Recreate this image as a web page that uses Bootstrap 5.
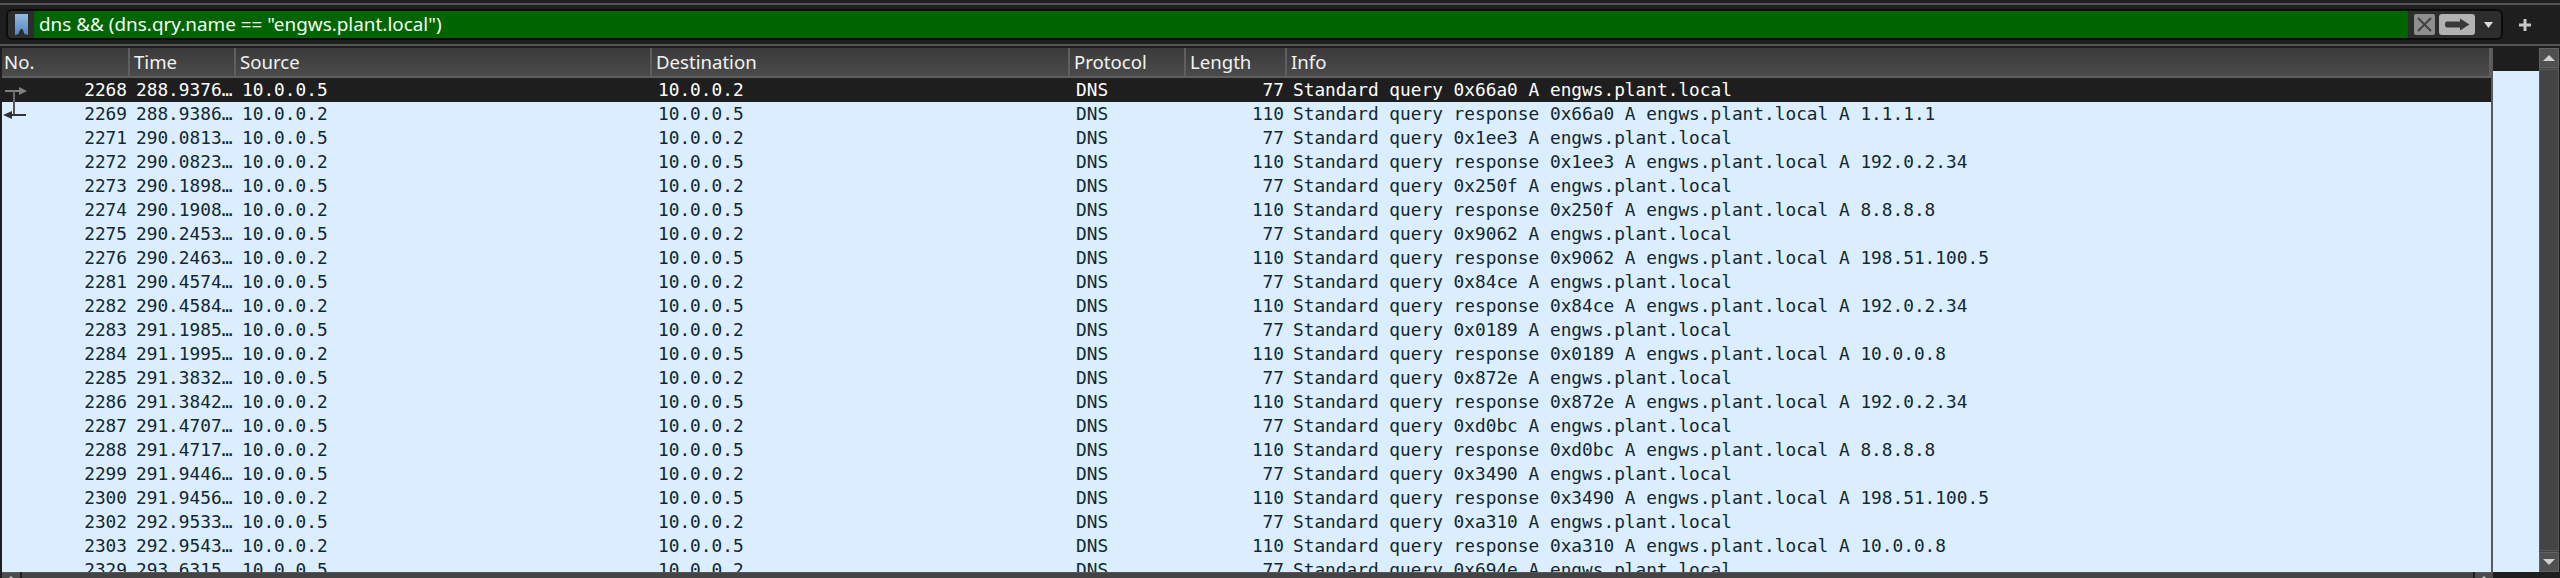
<!DOCTYPE html>
<html lang="en">
<head>
<meta charset="utf-8">
<title>Packet list</title>
<link href="https://cdn.jsdelivr.net/npm/bootstrap@5.3.0/dist/css/bootstrap.min.css" rel="stylesheet">
<style>
html,body{height:100%;background:#1e1e1e;overflow:hidden}
.ws-app{height:578px;background:#1e1e1e;overflow:hidden}
.ws-rule{height:2px;background:#555;margin-top:3px;flex:none}
.ws-filterrow{height:39px;padding:0 0 0 6px;flex:none}
.ws-filter{width:2497px;height:31px;background:#2d2d2d;border:2px solid #0c0c0c;border-radius:6px;overflow:hidden}
.ws-book{width:26px;flex:none}
.ws-input{flex:1;background:#006400;color:#f4fff4;font:18.9px/27px "Noto Sans",sans-serif;padding-left:5px;white-space:nowrap;height:27px}
.ws-x{width:21px;height:21px;background:#8e8e8e;border-radius:2px;margin-left:6px}
.ws-go{width:36px;height:21px;background:#b2b2b2;border-radius:3px;margin-left:4px}
.ws-drop{width:26px}
.ws-plus{flex:1;padding-right:13px}
.ws-rule2{height:2px;background:#555;flex:none}
.ws-main{height:526px;flex:none;padding-top:2px}
.ws-leftgap{width:2px;flex:none}
.ws-view{width:2537px;flex:none;background:#daeeff;position:relative;overflow:hidden}
.ws-corner{height:23px;background:#1e1e1e}
.ws-list{width:2491px;table-layout:fixed;margin:-23px 0 0;border-collapse:separate;border-spacing:0;border-right:2px solid #5a5a5a}
.ws-list th{height:30px;padding:0 0 0 4px;background:linear-gradient(#3a3a3a,#4b4b4b);color:#f2f2f2;font:400 18.6px/28px "Noto Sans",sans-serif;border-right:2px solid #5f5f5f;border-bottom:2px solid #5f5f5f;box-shadow:none;overflow:hidden}
.ws-list th:first-child{padding-left:2px}
.ws-list td{height:24px;padding:0 0 1px 6px;background:#daeeff;color:#12272e;font:17.8px/23px "DejaVu Sans Mono",monospace;white-space:nowrap;overflow:hidden;border:0;box-shadow:none}
.ws-list td.ws-num{text-align:right;padding:0 3px 1px 0}
.ws-list tr.ws-sel td{background:#1e1e1e;color:#fff}
.ws-marks{position:absolute;left:1px;top:39px}
.ws-vbar{width:20px;flex:none;background:#444}
.ws-vbtn{height:20px;flex:none;background:#505050;border:1px solid #626262}
.ws-track{flex:1;margin:1px 0;border:1px solid #585858;background:#444}
.ws-hbar{height:6px;flex:none}
.ws-hgap-l{width:2px}
.ws-hbtn{width:18px;background:#4c4c4c;border-top:1px solid #5a5a5a;overflow:hidden}
.ws-hsep{width:2px}
.ws-htrack{flex:1;background:#444;border-top:1px solid #555}
.ws-hgap-r{width:67px}
</style>
</head>
<body>
<div class="ws-app d-flex flex-column">
  <div class="ws-rule"></div>
  <div class="ws-filterrow d-flex align-items-center">
    <div class="ws-filter d-flex align-items-center">
      <div class="ws-book d-flex justify-content-center align-items-center">
        <svg width="13" height="21" viewBox="0 0 13 21"><defs><linearGradient id="bk" x1="0" y1="0" x2="0" y2="1"><stop offset="0" stop-color="#93b9e4"/><stop offset="1" stop-color="#5686c0"/></linearGradient></defs><path d="M0 0H13V21L9.500 20C8.500 17 8 15 6.500 15C5 15 4.500 17 3.500 20L0 21Z" fill="url(#bk)"/></svg>
      </div>
      <div class="ws-input">dns &amp;&amp; (dns.qry.name == "engws.plant.local")</div>
      <div class="ws-x d-flex justify-content-center align-items-center">
        <svg width="17" height="17" viewBox="0 0 17 17"><path d="M2 2L15 15M15 2L2 15" stroke="#404040" stroke-width="2"/></svg>
      </div>
      <div class="ws-go d-flex justify-content-center align-items-center">
        <svg width="25" height="13" viewBox="0 0 25 13"><path d="M2 3.500H15V0.500L24.500 6.500L15 12.500V9.500H2Q0 9.500 0 6.500Q0 3.500 2 3.500Z" fill="#383838"/></svg>
      </div>
      <div class="ws-drop d-flex justify-content-center align-items-center">
        <svg width="9" height="6" viewBox="0 0 9 6"><path d="M0 0H9L4.500 6Z" fill="#dcdcdc"/></svg>
      </div>
    </div>
    <div class="ws-plus d-flex justify-content-center align-items-center">
      <svg width="12" height="12" viewBox="0 0 12 12"><path d="M6 0V12M0 6H12" stroke="#c8c8c8" stroke-width="3"/></svg>
    </div>
  </div>
  <div class="ws-rule2"></div>
  <div class="ws-main d-flex">
    <div class="ws-leftgap"></div>
    <div class="ws-view">
      <div class="ws-corner"></div>
      <table class="ws-list" id="list">
        <colgroup><col style="width:128px"><col style="width:106px"><col style="width:416px"><col style="width:418px"><col style="width:116px"><col style="width:101px"><col></colgroup>
        <thead><tr><th>No.</th><th>Time</th><th>Source</th><th>Destination</th><th>Protocol</th><th>Length</th><th>Info</th></tr></thead>
        <tbody id="rows"></tbody>
      </table>
      <svg class="ws-marks" width="24" height="32" viewBox="0 0 24 32"><path d="M2 4H16" stroke="#808080" stroke-width="2"/><path d="M16 0L24 4L16 8Z" fill="#808080"/><path d="M11 4V15" stroke="#6a6a6a" stroke-width="2"/><path d="M11 15V28" stroke="#555" stroke-width="2"/><path d="M8 28H23" stroke="#333" stroke-width="2"/><path d="M0 28L9 24V32Z" fill="#333"/></svg>
    </div>
    <div class="ws-vbar d-flex flex-column">
      <div class="ws-vbtn d-flex justify-content-center align-items-center"><svg width="12" height="6" viewBox="0 0 12 6"><path d="M6 0L12 6H0Z" fill="#d0d0d0"/></svg></div>
      <div class="ws-track"></div>
      <div class="ws-vbtn d-flex justify-content-center align-items-center"><svg width="12" height="6" viewBox="0 0 12 6"><path d="M0 0H12L6 6Z" fill="#d0d0d0"/></svg></div>
    </div>
  </div>
  <div class="ws-hbar d-flex">
    <div class="ws-hgap-l"></div>
    <div class="ws-hbtn d-flex justify-content-center align-items-end"><svg width="4" height="2" viewBox="0 0 4 2"><path d="M2 0L4 2H0Z" fill="#c8c8c8"/></svg></div>
    <div class="ws-hsep"></div>
    <div class="ws-htrack"></div>
    <div class="ws-hsep"></div>
    <div class="ws-hbtn d-flex justify-content-center align-items-end"><svg width="4" height="2" viewBox="0 0 4 2"><path d="M2 0L4 2H0Z" fill="#c8c8c8"/></svg></div>
    <div class="ws-hgap-r"></div>
  </div>
</div>
<script>
var d=[["2268","288.9376…","10.0.0.5","10.0.0.2","77","Standard query 0x66a0 A engws.plant.local"],
["2269","288.9386…","10.0.0.2","10.0.0.5","110","Standard query response 0x66a0 A engws.plant.local A 1.1.1.1"],
["2271","290.0813…","10.0.0.5","10.0.0.2","77","Standard query 0x1ee3 A engws.plant.local"],
["2272","290.0823…","10.0.0.2","10.0.0.5","110","Standard query response 0x1ee3 A engws.plant.local A 192.0.2.34"],
["2273","290.1898…","10.0.0.5","10.0.0.2","77","Standard query 0x250f A engws.plant.local"],
["2274","290.1908…","10.0.0.2","10.0.0.5","110","Standard query response 0x250f A engws.plant.local A 8.8.8.8"],
["2275","290.2453…","10.0.0.5","10.0.0.2","77","Standard query 0x9062 A engws.plant.local"],
["2276","290.2463…","10.0.0.2","10.0.0.5","110","Standard query response 0x9062 A engws.plant.local A 198.51.100.5"],
["2281","290.4574…","10.0.0.5","10.0.0.2","77","Standard query 0x84ce A engws.plant.local"],
["2282","290.4584…","10.0.0.2","10.0.0.5","110","Standard query response 0x84ce A engws.plant.local A 192.0.2.34"],
["2283","291.1985…","10.0.0.5","10.0.0.2","77","Standard query 0x0189 A engws.plant.local"],
["2284","291.1995…","10.0.0.2","10.0.0.5","110","Standard query response 0x0189 A engws.plant.local A 10.0.0.8"],
["2285","291.3832…","10.0.0.5","10.0.0.2","77","Standard query 0x872e A engws.plant.local"],
["2286","291.3842…","10.0.0.2","10.0.0.5","110","Standard query response 0x872e A engws.plant.local A 192.0.2.34"],
["2287","291.4707…","10.0.0.5","10.0.0.2","77","Standard query 0xd0bc A engws.plant.local"],
["2288","291.4717…","10.0.0.2","10.0.0.5","110","Standard query response 0xd0bc A engws.plant.local A 8.8.8.8"],
["2299","291.9446…","10.0.0.5","10.0.0.2","77","Standard query 0x3490 A engws.plant.local"],
["2300","291.9456…","10.0.0.2","10.0.0.5","110","Standard query response 0x3490 A engws.plant.local A 198.51.100.5"],
["2302","292.9533…","10.0.0.5","10.0.0.2","77","Standard query 0xa310 A engws.plant.local"],
["2303","292.9543…","10.0.0.2","10.0.0.5","110","Standard query response 0xa310 A engws.plant.local A 10.0.0.8"],
["2329","293.6315…","10.0.0.5","10.0.0.2","77","Standard query 0x694e A engws.plant.local"]];
document.getElementById('rows').innerHTML=d.map(function(r,i){return '<tr'+(i?'':' class="ws-sel"')+'><td class="ws-num">'+r[0]+'</td><td>'+r[1]+'</td><td>'+r[2]+'</td><td>'+r[3]+'</td><td>DNS</td><td class="ws-num">'+r[4]+'</td><td>'+r[5]+'</td></tr>';}).join('');
</script>
<script src="https://cdn.jsdelivr.net/npm/bootstrap@5.3.0/dist/js/bootstrap.bundle.min.js"></script>
</body>
</html>
